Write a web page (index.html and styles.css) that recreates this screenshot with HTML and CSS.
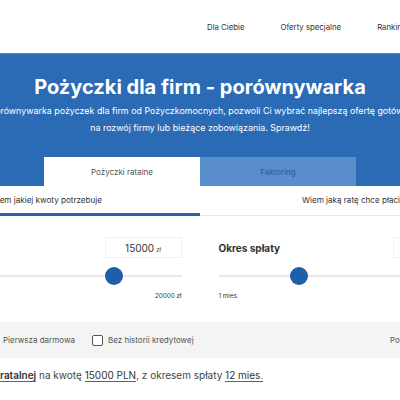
FILE: index.html
```html
<!DOCTYPE html>
<html lang="pl">
<head>
<meta charset="utf-8">
<title>Pożyczki dla firm - porównywarka</title>
<link rel="stylesheet" href="styles.css">
</head>
<body>
<header class="topbar">
  <nav class="nav">
    <a class="nav-link" href="#">Dla Ciebie</a>
    <a class="nav-link" href="#">Oferty specjalne</a>
    <a class="nav-link" href="#">Rankingi</a>
  </nav>
</header>

<section class="hero">
  <h1 class="hero-title">Pożyczki dla firm - porównywarka</h1>
  <p class="hero-lead">Porównywarka pożyczek dla firm od Pożyczkomocnych, pozwoli Ci wybrać najlepszą ofertę gotówki<br>na rozwój firmy lub bieżące zobowiązania. Sprawdź!</p>
  <div class="tabs">
    <div class="tab tab-active">Pożyczki ratalne</div>
    <div class="tab tab-inactive">Faktoring</div>
  </div>
</section>

<main class="page">
  <div class="modes">
    <div class="mode mode-active">Wiem jakiej kwoty potrzebuje</div>
    <div class="mode mode-other">Wiem jaką ratę chce płacić</div>
  </div>

  <div class="form">
    <div class="field">
      <div class="field-head">
        <span class="field-label">Kwota</span>
        <div class="field-input"><span class="field-value">15000</span><span class="field-unit">zł</span></div>
      </div>
      <div class="slider"><div class="thumb" style="left: 73%"></div></div>
      <div class="slider-scale"><span>1000 zł</span><span>20000 zł</span></div>
    </div>
    <div class="field">
      <div class="field-head">
        <span class="field-label">Okres spłaty</span>
        <div class="field-input"><span class="field-value">12</span><span class="field-unit">mies.</span></div>
      </div>
      <div class="slider"><div class="thumb" style="left: 32%"></div></div>
      <div class="slider-scale"><span>1 mies.</span><span>48 mies.</span></div>
    </div>
  </div>

  <div class="filters">
    <div class="filter-group">
      <label class="check"><span class="box"></span>Pierwsza darmowa</label>
      <label class="check"><span class="box"></span>Bez historii kredytowej</label>
    </div>
    <div class="filter-group">
      <span class="sort">Pokaż wszystkie</span>
    </div>
  </div>

  <p class="summary"><span class="summary-lead">Szukasz pożyczki </span><span class="hl hl-strong">ratalnej</span> na kwotę <span class="hl">15000 PLN</span>, z okresem spłaty <span class="hl">12 mies.</span></p>
</main>
</body>
</html>
```

FILE: styles.css
```css
* { box-sizing: border-box; }

html, body {
  margin: 0;
  padding: 0;
}

body {
  width: 400px;
  overflow: hidden;
  background: #ffffff;
  font-family: Inter, "Open Sans", "DejaVu Sans", sans-serif;
  color: #333333;
}

.topbar {
  height: 53px;
  display: flex;
  align-items: center;
}

.nav {
  display: flex;
  align-items: center;
  gap: 36px;
  padding-left: 207px;
  white-space: nowrap;
}

.nav-link {
  font-size: 7.8px;
  color: #333333;
  text-decoration: none;
}

.hero {
  background: #2b6bb5;
  border-top: 1px solid #4f86c6;
  padding-top: 21px;
  width: 600px;
  margin-left: -100px;
  text-align: center;
  color: #ffffff;
}

.hero-title {
  margin: 0;
  font-size: 20px;
  line-height: 24px;
  font-weight: 700;
  white-space: nowrap;
}

.hero-lead {
  margin: 3px 0 0;
  font-size: 8.9px;
  line-height: 17px;
  white-space: nowrap;
}

.tabs {
  display: flex;
  justify-content: center;
  margin-top: 21px;
}

.tab {
  width: 156px;
  height: 29px;
  display: flex;
  align-items: center;
  justify-content: center;
  font-size: 8px;
}

.tab-active {
  background: #ffffff;
  color: #555555;
}

.tab-inactive {
  background: #5a8dcb;
  color: #2a5a9c;
}

.page {
  width: 634px;
  margin-left: -117px;
}

.modes {
  display: grid;
  grid-template-columns: 1fr 1fr;
  height: 30px;
}

.mode {
  display: flex;
  align-items: center;
  font-size: 8.1px;
  color: #333333;
  white-space: nowrap;
}

.mode-active {
  justify-content: flex-end;
  padding-right: 98px;
  border-bottom: 3px solid #2a5fa5;
  padding-top: 1px;
}

.mode-other {
  padding-left: 102px;
  border-bottom: 1px solid #e8e8e8;
  padding-bottom: 2px;
}

.form {
  display: grid;
  grid-template-columns: 1fr 1fr;
  column-gap: 37px;
  padding: 21px 47px 0;
}

.field-head {
  display: flex;
  align-items: center;
  justify-content: space-between;
  height: 21px;
}

.field-label {
  font-size: 10px;
  font-weight: 700;
  color: #333333;
}

.field-input {
  width: 77px;
  height: 21px;
  border: 1px solid #f0f0f0;
  display: flex;
  align-items: baseline;
  justify-content: center;
  gap: 2px;
  padding-top: 4px;
}

.field-value {
  font-size: 10px;
  color: #333333;
}

.field-unit {
  font-size: 6px;
  color: #555555;
}

.slider {
  position: relative;
  height: 2px;
  margin-top: 17px;
  background: #e8e8e8;
}

.thumb {
  position: absolute;
  top: -8px;
  width: 18px;
  height: 18px;
  margin-left: -9px;
  border-radius: 50%;
  background: #1f5ea8;
}

.slider-scale {
  display: flex;
  justify-content: space-between;
  margin-top: 15px;
  font-size: 6.3px;
  color: #333333;
}

.filters {
  display: grid;
  grid-template-columns: 403px 1fr;
  align-items: center;
  height: 36px;
  margin-top: 22px;
  padding-left: 104px;
  background: #f4f4f4;
}

.filter-group {
  display: flex;
  align-items: center;
  gap: 17px;
  white-space: nowrap;
}

.check {
  display: flex;
  align-items: center;
  gap: 5px;
  font-size: 8px;
  color: #555555;
}

.box {
  width: 11px;
  height: 11px;
  border: 1px solid #555555;
  border-radius: 2px;
  background: #ffffff;
}

.sort {
  font-size: 8px;
  color: #555555;
}

.summary {
  margin: 10px 0 0;
  padding-left: 117px;
  font-size: 10px;
  line-height: 14px;
  color: #444444;
  white-space: nowrap;
}

.summary-lead {
  display: inline-block;
  width: 140px;
  margin-left: -140px;
  text-align: right;
}

.hl {
  color: #333333;
  border-bottom: 1px solid #2a6ab4;
}

.hl-strong {
  font-weight: 600;
}
```
